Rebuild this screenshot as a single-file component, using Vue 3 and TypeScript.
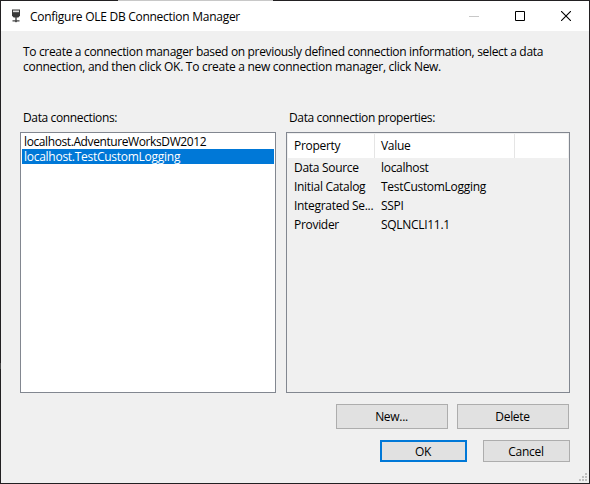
<script setup lang="ts">
interface Property {
  name: string
  value: string
}

const connections: string[] = ['localhost.AdventureWorksDW2012', 'localhost.TestCustomLogging']
const selected = 'localhost.TestCustomLogging'

const properties: Property[] = [
  { name: 'Data Source', value: 'localhost' },
  { name: 'Initial Catalog', value: 'TestCustomLogging' },
  { name: 'Integrated Se...', value: 'SSPI' },
  { name: 'Provider', value: 'SQLNCLI11.1' },
]
</script>

<template>
  <div class="window">
    <header class="titlebar">
      <svg class="app-icon" width="8" height="14" viewBox="0 0 8 14">
        <path d="M0 .5h8v6.3L6.3 8.5H1.7L0 6.8z" fill="#383838" />
        <path d="M1 1.5h6v1.7H1z" fill="#dcdcdc" />
        <path d="M3.3 8h1.4v3.2h2.8v1.4H5.2L4 13.6l-1.2-1H.5v-1.4h2.8z" fill="#444" />
      </svg>
      <h1 class="title">Configure OLE DB Connection Manager</h1>
      <div class="controls">
        <svg width="10" height="10" viewBox="0 0 10 10"><path d="M0 5.5h10" stroke="#c8c8c8" /></svg>
        <svg width="10" height="10" viewBox="0 0 10 10"><path d="M.5.5h9v9h-9z" fill="none" stroke="#000" /></svg>
        <svg width="10" height="10" viewBox="0 0 10 10"><path d="M0 0l10 10M10 0L0 10" stroke="#000" stroke-width="1.1" /></svg>
      </div>
    </header>

    <main class="content">
      <p class="intro">
        <span class="line-one">To create a connection manager based on previously defined connection information, select a data</span><br />
        <span class="line-two">connection, and then click OK. To create a new connection manager, click New.</span>
      </p>

      <div class="panes">
        <section class="pane">
          <h2 class="label">Data connections:</h2>
          <ul class="listbox">
            <li v-for="c in connections" :key="c" :class="{ selected: c === selected }">{{ c }}</li>
          </ul>
        </section>
        <section class="pane">
          <h2 class="label">Data connection properties:</h2>
          <div class="grid">
            <div class="row head"><span>Property</span><span>Value</span><span></span></div>
            <div v-for="p in properties" :key="p.name" class="row">
              <span>{{ p.name }}</span><span>{{ p.value }}</span>
            </div>
          </div>
        </section>
      </div>

      <div class="actions">
        <button type="button">New...</button>
        <button type="button">Delete</button>
      </div>
      <div class="confirm">
        <button type="button" class="primary">OK</button>
        <button type="button">Cancel</button>
      </div>
    </main>

    <svg class="grip" width="8" height="8" viewBox="0 0 8 8">
      <path d="M6 0h2v2H6zM3 3h2v2H3zM6 3h2v2H6zM0 6h2v2H0zM3 6h2v2H3zM6 6h2v2H6z" fill="#bfbfbf" />
    </svg>
    <i class="edge-top"></i>
    <i class="edge-left"></i>
  </div>
</template>

<style>
body {
  margin: 0;
  overflow: hidden;
}
</style>

<style scoped>
.window {
  position: relative;
  box-sizing: border-box;
  width: 590px;
  height: 484px;
  border: 1px solid #222022;
  background: #f0f0f0;
  color: #000;
  font: 12px/15px 'Open Sans', 'Noto Sans', sans-serif;
  letter-spacing: -0.3px;
  white-space: nowrap;
}
.titlebar {
  display: flex;
  align-items: center;
  height: 30px;
  padding: 0 13px 0 11px;
  background: #fff;
}
.app-icon {
  margin-right: 10px;
}
h1,
h2,
p,
ul {
  margin: 0;
  padding: 0;
  font-size: inherit;
  font-weight: 400;
}
.title {
  letter-spacing: -0.27px;
}
.controls {
  display: flex;
  gap: 36px;
  margin-left: auto;
  margin-right: 5px;
}
.content {
  padding: 13px 19px 0;
}
.intro {
  padding-left: 3px;
  height: 66px;
}
.line-one {
  letter-spacing: -0.33px;
}
.line-two {
  letter-spacing: -0.28px;
}
.panes {
  display: grid;
  grid-template-columns: 256px 284px;
  gap: 10px;
}
.label {
  height: 22px;
  padding-left: 3px;
  letter-spacing: -0.37px;
}
.listbox,
.grid {
  box-sizing: border-box;
  height: 261px;
  border: 1px solid #828790;
}
.listbox {
  padding: 1px;
  background: #fff;
  list-style: none;
}
.listbox li {
  height: 15px;
  padding-left: 2px;
  letter-spacing: -0.4px;
}
.listbox .selected {
  background: #0078d7;
  color: #fff;
  letter-spacing: -0.27px;
}
.grid {
  padding: 1px;
}
.row {
  display: grid;
  grid-template-columns: 87px 140px 1fr;
  height: 19px;
  line-height: 19px;
}
.row span {
  box-sizing: border-box;
  padding-left: 6px;
}
.head {
  height: 24px;
  background: #fff;
  line-height: 24px;
}
.head span:not(:last-child) {
  border-right: 1px solid #e5e5e5;
}
button {
  box-sizing: border-box;
  width: 112px;
  height: 25px;
  padding: 0 1px 0 0;
  border: 1px solid #adadad;
  background: #e1e1e1;
  color: #000;
  font: inherit;
  letter-spacing: inherit;
}
.actions {
  display: flex;
  justify-content: flex-end;
  gap: 9px;
  margin: 11px 1px 0 0;
}
.confirm {
  display: flex;
  justify-content: flex-end;
  gap: 16px;
  margin-top: 11px;
}
.confirm button {
  width: 87px;
  height: 22px;
}
.confirm .primary {
  border: 2px solid #0078d7;
}
.grip {
  position: absolute;
  right: 2px;
  bottom: 2px;
}
.edge-top {
  position: absolute;
  top: -1px;
  left: 117px;
  width: 155px;
  height: 1px;
  background: #c8c8c8;
}
.edge-left {
  position: absolute;
  top: 362px;
  left: -1px;
  width: 1px;
  height: 6px;
  background: #444;
}
</style>
